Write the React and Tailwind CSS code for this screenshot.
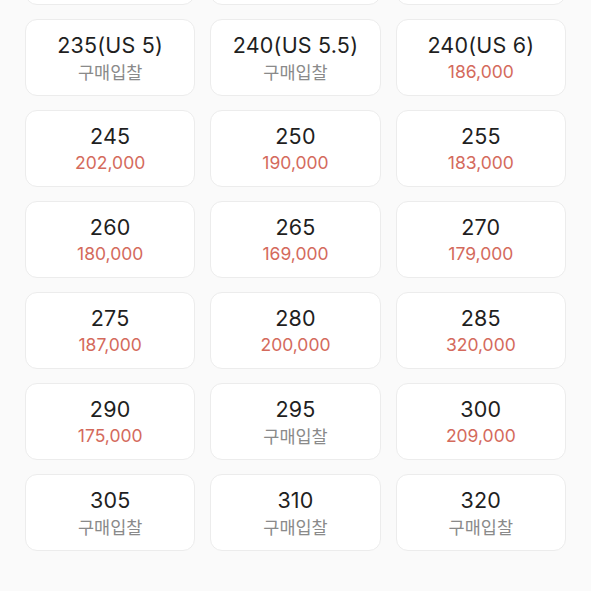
import React from "react";

const rows = [
  [null, null, null],
  [["235(US 5)", null], ["240(US 5.5)", null], ["240(US 6)", "186,000"]],
  [["245", "202,000"], ["250", "190,000"], ["255", "183,000"]],
  [["260", "180,000"], ["265", "169,000"], ["270", "179,000"]],
  [["275", "187,000"], ["280", "200,000"], ["285", "320,000"]],
  [["290", "175,000"], ["295", null], ["300", "209,000"]],
  [["305", null], ["310", null], ["320", null]],
];

export default function App() {
  return (
    <div
      className="w-[591px] h-[591px] overflow-hidden bg-[#fafafa]"
      style={{ fontFamily: 'Inter, "Noto Sans CJK KR", sans-serif' }}
    >
      <div className="-mt-[72px] px-[25px] grid grid-cols-3 gap-x-[15px] gap-y-[14px]">
        {rows.flat().map((cell, i) => (
          <div
            key={i}
            className="h-[77px] bg-white border border-[#ececec] rounded-[12px] flex flex-col items-center justify-center"
          >
            {cell && (
              <>
                <div className="text-[21.5px] leading-[24px] text-[#1f1f1f] tracking-[0.2px]">{cell[0]}</div>
                <div
                  className={
                    "mt-[5px] text-[17.5px] leading-[20px] " +
                    (cell[1] ? "text-[#d46a5c]" : "text-[#8a8a8a]")
                  }
                  style={cell[1] ? undefined : { fontFamily: '"Noto Sans CJK KR", sans-serif' }}
                >
                  {cell[1] || "구매입찰"}
                </div>
              </>
            )}
          </div>
        ))}
      </div>
    </div>
  );
}
